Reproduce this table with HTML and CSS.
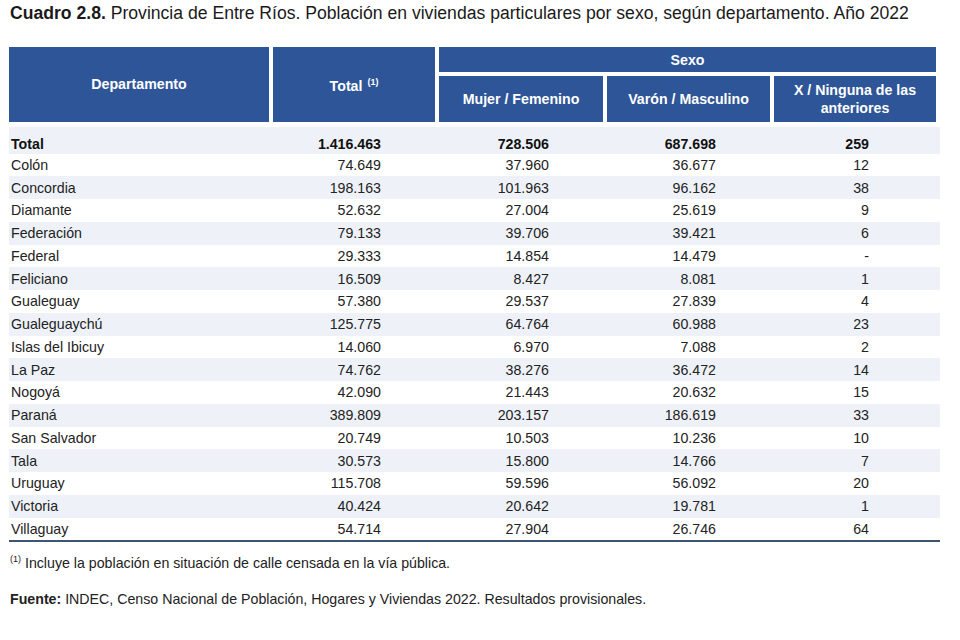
FILE: index.html
```html
<!DOCTYPE html>
<html lang="es">
<head>
<meta charset="utf-8">
<title>Cuadro 2.8</title>
<link rel="stylesheet" href="styles.css">
</head>
<body>
<div class="page">
  <h1 class="title"><b>Cuadro 2.8.</b> Provincia de Entre Ríos. Población en viviendas particulares por sexo, según departamento. Año 2022</h1>

  <div class="table">
    <div class="head">
      <div class="hc dept"><span>Departamento</span></div>
      <div class="hc total"><span>Total <sup>(1)</sup></span></div>
      <div class="sexo">
        <div class="hc sexo-top"><span>Sexo</span></div>
        <div class="sexo-sub">
          <div class="hc"><span>Mujer / Femenino</span></div>
          <div class="hc"><span>Varón / Masculino</span></div>
          <div class="hc"><span>X / Ninguna de las<br>anteriores</span></div>
        </div>
      </div>
    </div>

    <div class="body">
      <div class="row alt strong first"><span class="name">Total</span><span class="n">1.416.463</span><span class="n">728.506</span><span class="n">687.698</span><span class="n x">259</span></div>
      <div class="row"><span class="name">Colón</span><span class="n">74.649</span><span class="n">37.960</span><span class="n">36.677</span><span class="n x">12</span></div>
      <div class="row alt"><span class="name">Concordia</span><span class="n">198.163</span><span class="n">101.963</span><span class="n">96.162</span><span class="n x">38</span></div>
      <div class="row"><span class="name">Diamante</span><span class="n">52.632</span><span class="n">27.004</span><span class="n">25.619</span><span class="n x">9</span></div>
      <div class="row alt"><span class="name">Federación</span><span class="n">79.133</span><span class="n">39.706</span><span class="n">39.421</span><span class="n x">6</span></div>
      <div class="row"><span class="name">Federal</span><span class="n">29.333</span><span class="n">14.854</span><span class="n">14.479</span><span class="n x">-</span></div>
      <div class="row alt"><span class="name">Feliciano</span><span class="n">16.509</span><span class="n">8.427</span><span class="n">8.081</span><span class="n x">1</span></div>
      <div class="row"><span class="name">Gualeguay</span><span class="n">57.380</span><span class="n">29.537</span><span class="n">27.839</span><span class="n x">4</span></div>
      <div class="row alt"><span class="name">Gualeguaychú</span><span class="n">125.775</span><span class="n">64.764</span><span class="n">60.988</span><span class="n x">23</span></div>
      <div class="row"><span class="name">Islas del Ibicuy</span><span class="n">14.060</span><span class="n">6.970</span><span class="n">7.088</span><span class="n x">2</span></div>
      <div class="row alt"><span class="name">La Paz</span><span class="n">74.762</span><span class="n">38.276</span><span class="n">36.472</span><span class="n x">14</span></div>
      <div class="row"><span class="name">Nogoyá</span><span class="n">42.090</span><span class="n">21.443</span><span class="n">20.632</span><span class="n x">15</span></div>
      <div class="row alt"><span class="name">Paraná</span><span class="n">389.809</span><span class="n">203.157</span><span class="n">186.619</span><span class="n x">33</span></div>
      <div class="row"><span class="name">San Salvador</span><span class="n">20.749</span><span class="n">10.503</span><span class="n">10.236</span><span class="n x">10</span></div>
      <div class="row alt"><span class="name">Tala</span><span class="n">30.573</span><span class="n">15.800</span><span class="n">14.766</span><span class="n x">7</span></div>
      <div class="row"><span class="name">Uruguay</span><span class="n">115.708</span><span class="n">59.596</span><span class="n">56.092</span><span class="n x">20</span></div>
      <div class="row alt"><span class="name">Victoria</span><span class="n">40.424</span><span class="n">20.642</span><span class="n">19.781</span><span class="n x">1</span></div>
      <div class="row last"><span class="name">Villaguay</span><span class="n">54.714</span><span class="n">27.904</span><span class="n">26.746</span><span class="n x">64</span></div>
    </div>
  </div>

  <p class="note"><sup>(1)</sup> Incluye la población en situación de calle censada en la vía pública.</p>
  <p class="source"><b>Fuente:</b> INDEC, Censo Nacional de Población, Hogares y Viviendas 2022. Resultados provisionales.</p>
</div>
</body>
</html>
```

FILE: styles.css
```css
html, body {
  margin: 0;
  padding: 0;
  background: #ffffff;
}

.page {
  font-family: "Liberation Sans", Arial, sans-serif;
  color: #1f1f1f;
  padding: 3px 0 0 10px;
}

.title {
  margin: 0;
  font-size: 17.6px;
  font-weight: normal;
  line-height: 20px;
  color: #1a1a1a;
  white-space: nowrap;
}

.title b {
  font-weight: bold;
}

.table {
  margin: 24px 0 0 -1px;
  width: 931px;
}

.head {
  display: grid;
  grid-template-columns: 260px 162px 497px;
  column-gap: 4px;
  height: 75px;
}

.hc {
  background: #2e5597;
  color: #ffffff;
  font-weight: bold;
  font-size: 14.2px;
  line-height: 18px;
  display: flex;
  align-items: center;
  justify-content: center;
  text-align: center;
}

.hc sup {
  font-size: 9px;
  line-height: 0;
  vertical-align: 6px;
  margin-left: 1px;
}

.dept span {
  margin-bottom: 2px;
}

.total span {
  margin-top: 2px;
}

.sexo {
  display: grid;
  grid-template-rows: 25px 1fr;
  row-gap: 4px;
}

.sexo-sub {
  display: grid;
  grid-template-columns: 164px 163px 162px;
  column-gap: 4px;
}

.body {
  margin-top: 5px;
  border-bottom: 2px solid #3c5572;
}

.row {
  display: grid;
  grid-template-columns: 264px 166px 168px 167px 166px;
  height: 22.75px;
  align-items: center;
  font-size: 14.2px;
  color: #222222;
}

.row.first {
  height: 26.5px;
  align-items: end;
}

.row.first span {
  padding-bottom: 2px;
}

.row.alt {
  background: #eef2f8;
}

.row.strong {
  font-weight: bold;
  color: #111111;
}

.name {
  padding-left: 2px;
}

.n {
  text-align: right;
  padding-right: 58px;
}

.n.x {
  padding-right: 71px;
}

.note {
  margin: 13px 0 0 0;
  font-size: 14.2px;
  color: #222222;
}

.note sup {
  font-size: 9px;
  vertical-align: 6px;
  line-height: 0;
}

.source {
  margin: 20px 0 0 0;
  font-size: 14.2px;
  color: #222222;
}
```
